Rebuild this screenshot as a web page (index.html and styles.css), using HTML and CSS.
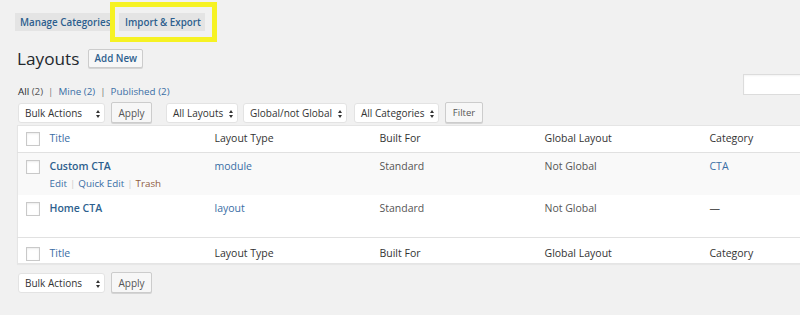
FILE: index.html
```html
<!DOCTYPE html>
<html>
<head>
<meta charset="utf-8">
<link rel="stylesheet" href="styles.css">
</head>
<body>
<div class="wrap">
  <div class="tabs">
    <span class="tab tab-cats">Manage Categories</span>
    <span class="tab tab-hl">Import &amp; Export</span>
  </div>
  <div class="head">
    <h1 class="title">Layouts</h1>
    <span class="btn btn-add">Add New</span>
  </div>
  <div class="subrow">
    <ul class="subsub">
      <li class="current">All <span class="count">(2)</span></li>
      <li class="sep">|</li>
      <li><a>Mine <span class="count">(2)</span></a></li>
      <li class="sep">|</li>
      <li><a>Published <span class="count">(2)</span></a></li>
    </ul>
    <span class="search"></span>
  </div>
  <div class="toolbar">
    <span class="select sel-bulk">Bulk Actions<i class="arr"></i></span>
    <span class="btn btn-apply">Apply</span>
    <span class="select sel-layouts">All Layouts<i class="arr"></i></span>
    <span class="select sel-global">Global/not Global<i class="arr"></i></span>
    <span class="select sel-cats">All Categories<i class="arr"></i></span>
    <span class="btn btn-filter">Filter</span>
  </div>
  <table class="list">
    <colgroup>
      <col class="c-cb"><col class="c-w"><col class="c-w"><col class="c-w"><col class="c-w"><col>
    </colgroup>
    <thead>
      <tr>
        <td class="cb"><span class="check"></span></td>
        <th class="lnk">Title</th>
        <th>Layout Type</th>
        <th>Built For</th>
        <th>Global Layout</th>
        <th>Category</th>
      </tr>
    </thead>
    <tbody>
      <tr class="alt">
        <td class="cb"><span class="check"></span></td>
        <td><a class="row-title">Custom CTA</a>
          <div class="actions"><a>Edit</a><span class="bar">|</span><a>Quick Edit</a><span class="bar">|</span><a class="trash">Trash</a></div>
        </td>
        <td><a>module</a></td>
        <td>Standard</td>
        <td>Not Global</td>
        <td><a>CTA</a></td>
      </tr>
      <tr class="second">
        <td class="cb"><span class="check"></span></td>
        <td><a class="row-title">Home CTA</a></td>
        <td><a>layout</a></td>
        <td>Standard</td>
        <td>Not Global</td>
        <td>—</td>
      </tr>
    </tbody>
    <tfoot>
      <tr>
        <td class="cb"><span class="check"></span></td>
        <th class="lnk">Title</th>
        <th>Layout Type</th>
        <th>Built For</th>
        <th>Global Layout</th>
        <th>Category</th>
      </tr>
    </tfoot>
  </table>
  <div class="toolbar bottom">
    <span class="select sel-bulk">Bulk Actions<i class="arr"></i></span>
    <span class="btn btn-apply">Apply</span>
  </div>
</div>
</body>
</html>
```

FILE: styles.css
```css
html, body {
  margin: 0;
  padding: 0;
  background: #f1f1f1;
  overflow: hidden;
}
body {
  font-family: "Open Sans", "Noto Sans", sans-serif;
  font-size: 10.5px;
  color: #555;
  width: 800px;
  height: 315px;
}
a { color: #3a6ea5; text-decoration: none; }

.wrap {
  width: 803px;
  padding-left: 17px;
  box-sizing: border-box;
}

/* top tabs */
.tabs {
  display: flex;
  gap: 8px;
  margin-top: 13px;
  margin-left: -2px;
  height: 18px;
}
.tab {
  display: flex;
  align-items: center;
  box-sizing: border-box;
  height: 18px;
  padding: 0 0 0 5px;
  background: #e4e4e4;
  color: #2d5f8e;
  font-weight: 600;
  font-size: 9.8px;
  white-space: nowrap;
  position: relative;
}
.tab-cats { width: 96px; overflow: hidden; }
.tab-hl { width: 86px; padding-left: 6px; }
.tab-hl::after {
  content: "";
  position: absolute;
  left: -9px;
  top: -11px;
  right: -12px;
  bottom: -11px;
  border: 5px solid #f6f223;
}

/* heading */
.head {
  display: flex;
  align-items: center;
  gap: 9px;
  margin-top: 18px;
  height: 19px;
}
.title {
  margin: 0;
  font-size: 17.2px;
  font-weight: 400;
  color: #23282d;
  line-height: 19px;
}
.btn {
  display: inline-flex;
  align-items: center;
  justify-content: center;
  box-sizing: border-box;
  background: #f7f7f7;
  border: 1px solid #cccccc;
  border-radius: 2px;
  box-shadow: 0 1px 0 #d5d5d5;
  color: #555;
  font-size: 10px;
}
.btn-add {
  height: 19px;
  width: 55px;
  color: #2d5f8e;
  font-weight: 600;
  font-size: 9.8px;
}

/* status links */
.subrow {
  display: flex;
  justify-content: space-between;
  align-items: flex-end;
  margin-top: 6px;
  height: 21px;
}
.subsub {
  list-style: none;
  margin: 0 0 -4px 1px;
  padding: 0;
  display: flex;
  gap: 5px;
  line-height: 14px;
  font-size: 9.8px;
}
.subsub .current { color: #23282d; }
.subsub .current .count { color: #555; }
.subsub .sep { color: #777; }
.subsub a .count { color: #3a6ea5; }
.search {
  width: 60px;
  height: 21px;
  box-sizing: border-box;
  background: #fff;
  border: 1px solid #dcdcdc;
  box-shadow: inset 0 1px 2px rgba(0,0,0,0.05);
}

/* toolbar */
.toolbar {
  display: flex;
  align-items: center;
  margin-top: 7px;
  height: 21px;
  margin-left: 1px;
}
.select {
  display: inline-flex;
  align-items: center;
  box-sizing: border-box;
  height: 20px;
  background: #fff;
  border: 1px solid #e3e3e3;
  border-radius: 3px;
  padding-left: 6px;
  color: #333;
  font-size: 10px;
  position: relative;
}
.arr {
  position: absolute;
  right: 5px;
  top: 6px;
  width: 0;
  height: 0;
}
.arr::before, .arr::after {
  content: "";
  position: absolute;
  left: -3px;
  border-left: 2.5px solid transparent;
  border-right: 2.5px solid transparent;
}
.arr::before { top: 0; border-bottom: 3px solid #333; }
.arr::after { top: 5px; border-top: 3px solid #333; }

.sel-bulk { width: 87px; }
.btn-apply { width: 41px; height: 21px; margin-left: 6px; }
.sel-layouts { width: 72px; margin-left: 14px; }
.sel-global { width: 104px; margin-left: 5px; }
.sel-cats { width: 85px; margin-left: 7px; }
.btn-filter { width: 38px; height: 21px; margin-left: 6px; font-size: 9.5px; }

/* table */
.list {
  margin-top: 2px;
  border-collapse: collapse;
  table-layout: fixed;
  width: 830px;
  background: #fff;
  border: 1px solid #e5e5e5;
  box-shadow: 0 1px 1px rgba(0,0,0,0.04);
}
.c-cb { width: 24px; }
.c-w { width: 165px; }
.list th, .list td {
  text-align: left;
  font-weight: 400;
  vertical-align: top;
  line-height: 15px;
  padding: 0 8px;
}
.list td.cb { padding: 0 0 0 8px; }
.check {
  display: block;
  width: 12px;
  height: 12px;
  border: 1px solid #c9c9c9;
  background: #fff;
  box-shadow: inset 0 1px 2px rgba(0,0,0,0.08);
}
.list thead th, .list thead td { padding-top: 5px; padding-bottom: 6px; }
.list thead tr { border-bottom: 1px solid #e1e1e1; }
.list thead td.cb { padding-top: 6px; }
.list tfoot td.cb { padding-top: 9px; }
.list th { color: #333; }
.list th.lnk { color: #3a6ea5; }

.list tbody td { padding-top: 6px; }
.list tbody td.cb { padding-top: 7px; }
.list tr.alt { height: 42px; }
.list tr.alt td { background: #f9f9f9; }
.list tr.second { height: 43px; }
.row-title { font-weight: 600; color: #2d5f8e; font-size: 10.5px; }
.actions { margin-top: 2px; color: #555; font-size: 9.8px; }
.actions .bar { color: #ccc; margin: 0 3px; }
.actions .trash { color: #8f5c3f; }

.list tfoot tr { border-top: 1px solid #e1e1e1; }
.list tfoot th, .list tfoot td { padding-top: 8px; padding-bottom: 2px; }

.toolbar.bottom { margin-top: 8px; }
```
